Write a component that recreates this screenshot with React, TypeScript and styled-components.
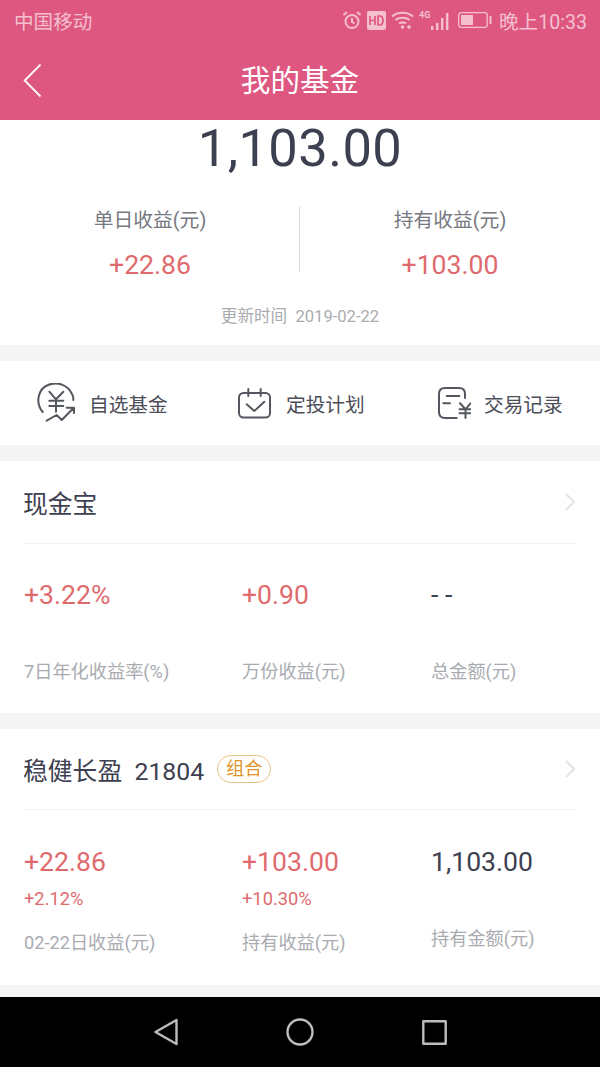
import React from "react";
import styled, { createGlobalStyle } from "styled-components";

const Global = createGlobalStyle`
  html, body { margin: 0; padding: 0; background: #f5f5f5; }
  body { font-family: Roboto, "Noto Sans CJK SC", sans-serif; }
  * { box-sizing: border-box; }
`;
const Page = styled.div`
  width: 600px; height: 1067px; display: flex; flex-direction: column; overflow: hidden; background: #f5f5f5;
`;
const Top = styled.div`
  background: #de5780; height: 120px; flex: none; display: flex; flex-direction: column;
`;
const Status = styled.div`
  height: 40px; padding: 0 13px 0 14px; display: flex; align-items: center; justify-content: space-between;
  color: #f4c0d0; font-size: 19.6px;
`;
const StatusRight = styled.div`
  display: flex; align-items: center; gap: 5px;
`;
const SignalIcon = styled.svg`
  margin-right: 4px;
`;
const BatteryIcon = styled.svg`
  margin-right: 2px;
`;
const Header = styled.div`
  height: 80px; display: flex; align-items: center; justify-content: center; position: relative;
  color: #fff; font-size: 29.6px; padding-bottom: 3px;
`;
const Back = styled.svg`
  position: absolute; left: 23px; top: 24px;
`;
const Hero = styled.div`
  background: #fff; height: 225px; flex: none; display: flex; flex-direction: column; align-items: center;
`;
const Total = styled.div`
  font-size: 52.5px; line-height: 56px; color: #3d4050; height: 56px; letter-spacing: 0.4px;
`;
const Split = styled.div`
  width: 100%; display: flex; margin-top: 30px; position: relative;
  &::before {
    content: ""; position: absolute; left: 299px; top: 0; width: 1px; height: 66px; background: #dcdcdc;
  }
`;
const SplitCol = styled.div`
  flex: 1; display: flex; flex-direction: column; align-items: center;
`;
const SplitLabel = styled.div`
  font-size: 19.8px; line-height: 30px; color: #76787f;
`;
const SplitValue = styled.div`
  font-size: 26.6px; line-height: 30px; color: #df6a6e; margin-top: 14px;
`;
const Updated = styled.div`
  font-size: 16.6px; line-height: 22px; color: #a9abb0; margin-top: 26px; white-space: pre;
`;
const Gap = styled.div<{ $h: number }>`
  height: ${(p) => p.$h}px; flex: none; background: #f5f5f5;
`;
const Shortcuts = styled.div`
  background: #fff; height: 84px; flex: none; display: grid; grid-template-columns: 201px 200px 1fr; padding-left: 37px; align-items: center;
`;
const Shortcut = styled.div`
  display: flex; align-items: center; gap: 13px; color: #4c4e58; font-size: 19.7px;
`;
const Card = styled.div<{ $h: number }>`
  background: #fff; height: ${(p) => p.$h}px; flex: none; padding: 0 24px; display: flex; flex-direction: column;
`;
const CardHead = styled.div<{ $h: number }>`
  height: ${(p) => p.$h}px; flex: none; border-bottom: 1px solid #f2f2f2; display: flex; align-items: center; position: relative;
  font-size: 24.8px; color: #3d4050; padding-bottom: 1px;
`;
const CardTitle = styled.span`
  white-space: pre; margin-left: -1px;
`;
const Tag = styled.span`
  margin-left: 13px; width: 54px; height: 28px; border: 1px solid #e8c283; border-radius: 14px;
  font-size: 18px; line-height: 25px; color: #e0952a; text-align: center;
`;
const Chevron = styled.svg`
  position: absolute; right: 0; top: 50%; transform: translateY(-50%);
`;
const Cols = styled.div`
  display: grid; grid-template-columns: 218px 189px 1fr; flex: 1;
`;
const Col = styled.div<{ $pt: number }>`
  display: flex; flex-direction: column; padding-top: ${(p) => p.$pt}px;
`;
const Value = styled.div<{ $dark?: boolean }>`
  font-size: 26.6px; line-height: 30px; color: ${(p) => (p.$dark ? "#3d4050" : "#df6a6e")};
`;
const Sub = styled.div`
  font-size: 18.3px; line-height: 20px; color: #df6a6e; margin-top: 12px;
`;
const Label = styled.div<{ $mt: number }>`
  font-size: 18.2px; line-height: 24px; color: #a9abb0; margin-top: ${(p) => p.$mt}px;
`;
const Nav = styled.div`
  margin-top: auto; height: 70px; flex: none; background: #000; display: flex; align-items: center; justify-content: center; gap: 108px;
`;

const Chev = () => (
  <Chevron width="12" height="18" viewBox="0 0 12 18" fill="none">
    <path d="M2 1l8 8-8 8" stroke="#e6e6e6" strokeWidth="2.4" />
  </Chevron>
);

const ico = { fill: "none", stroke: "#55575f", strokeWidth: 2, strokeLinecap: "round" as const, strokeLinejoin: "round" as const };
const statusColor = "#f4c0d0";

export default function App() {
  return (
    <Page>
      <Global />
      <Top>
        <Status>
          <span>中国移动</span>
          <StatusRight>
            <svg width="20" height="20" viewBox="0 0 20 20" fill="none" stroke={statusColor} strokeWidth="2">
              <circle cx="10" cy="11.5" r="6.5" />
              <path d="M10 8v4l2.5 1.5M1.5 5L5 2M18.5 5L15 2" />
            </svg>
            <svg width="19" height="19" viewBox="0 0 19 19">
              <rect width="19" height="19" rx="2" fill={statusColor} />
              <path d="M3 5v9M8 5v9M3 9.5h5M11 5v9h1.500c2.500 0 3.500-2 3.500-4.500S15 5 12.500 5z" stroke="#de5780" strokeWidth="1.7" fill="none" />
            </svg>
            <svg width="23" height="20" viewBox="0 0 23 20" fill="none" stroke={statusColor} strokeWidth="2">
              <path d="M1 6.500c5.500-5 15.500-5 21 0M4.500 10c3.500-3 10.500-3 14 0M8 13.500c1.500-1.200 5.500-1.200 7 0" />
              <circle cx="11.5" cy="17" r="1.7" fill={statusColor} stroke="none" />
              <path d="M18 15v4M16 17h4" strokeWidth="1.5" />
            </svg>
            <SignalIcon width="30" height="21" viewBox="0 0 30 21" fill={statusColor}>
              <text x="0" y="8" fontSize="9" fontWeight="700" fontFamily="Roboto, sans-serif">4G</text>
              <rect x="12" y="16" width="2.4" height="4" />
              <rect x="17" y="13" width="2.4" height="7" />
              <rect x="22" y="8" width="2.4" height="12" />
              <rect x="27" y="3" width="2.4" height="17" />
            </SignalIcon>
            <BatteryIcon width="34" height="16" viewBox="0 0 34 16">
              <rect x="0.7" y="0.7" width="28.5" height="14.6" rx="2.5" fill="none" stroke={statusColor} strokeWidth="1.3" />
              <rect x="3" y="3" width="12" height="10" fill={statusColor} />
              <rect x="31.5" y="4" width="2" height="8" fill={statusColor} />
            </BatteryIcon>
            <span>晚上10:33</span>
          </StatusRight>
        </Status>
        <Header>
          <Back width="19" height="33" viewBox="0 0 19 33" fill="none">
            <path d="M17.500 0.500L1.700 16.500 17.500 32.500" stroke="#fff" strokeWidth="1.8" />
          </Back>
          我的基金
        </Header>
      </Top>
      <Hero>
        <Total>1,103.00</Total>
        <Split>
          <SplitCol>
            <SplitLabel>单日收益(元)</SplitLabel>
            <SplitValue>+22.86</SplitValue>
          </SplitCol>
          <SplitCol>
            <SplitLabel>持有收益(元)</SplitLabel>
            <SplitValue>+103.00</SplitValue>
          </SplitCol>
        </Split>
        <Updated>更新时间  2019-02-22</Updated>
      </Hero>
      <Gap $h={16} />
      <Shortcuts>
        <Shortcut>
          <svg width="39" height="40" viewBox="0 0 39 40" {...ico}>
            <path d="M5.700 29C-2 20 1 6 11 2c9-4 20 0 24 9 1.500 2.500 1.500 4 1.300 6" />
            <path d="M12.300 8.700L19 16.300l7.300-7.600M12.300 17.700h14M12.300 23h14M19 17v11.700" />
            <path d="M9.700 37.700L19.700 32l5 5 11.600-11.700M29.700 24.700H37V30" />
          </svg>
          自选基金
        </Shortcut>
        <Shortcut>
          <svg width="35" height="31" viewBox="0 0 35 31" {...ico}>
            <rect x="1" y="5" width="31" height="24.5" rx="4.5" />
            <path d="M10.300 1v7M22.700 1v7M8.700 16.300l7.600 6.700 10-9.300" />
          </svg>
          定投计划
        </Shortcut>
        <Shortcut>
          <svg width="33" height="32" viewBox="0 0 33 32" {...ico}>
            <path d="M27 11V7c0-4-2-6-6-6H7C3 1 1 3 1 7v18c0 4 2 6 6 6h11.700" />
            <path d="M8.700 9h12.600M5.300 16.300H12M22 16.300l5.500 6 5-6M21.500 22.300h11M21.500 26.300h11M27.500 22.300V31" />
          </svg>
          交易记录
        </Shortcut>
      </Shortcuts>
      <Gap $h={16} />
      <Card $h={252}>
        <CardHead $h={83}>
          <CardTitle>现金宝</CardTitle>
          <Chev />
        </CardHead>
        <Cols>
          <Col $pt={36}>
            <Value>+3.22%</Value>
            <Label $mt={50}>7日年化收益率(%)</Label>
          </Col>
          <Col $pt={36}>
            <Value>+0.90</Value>
            <Label $mt={50}>万份收益(元)</Label>
          </Col>
          <Col $pt={36}>
            <Value $dark>- -</Value>
            <Label $mt={50}>总金额(元)</Label>
          </Col>
        </Cols>
      </Card>
      <Gap $h={16} />
      <Card $h={256}>
        <CardHead $h={81}>
          <CardTitle>稳健长盈  21804</CardTitle>
          <Tag>组合</Tag>
          <Chev />
        </CardHead>
        <Cols>
          <Col $pt={37}>
            <Value>+22.86</Value>
            <Sub>+2.12%</Sub>
            <Label $mt={22}>02-22日收益(元)</Label>
          </Col>
          <Col $pt={37}>
            <Value>+103.00</Value>
            <Sub>+10.30%</Sub>
            <Label $mt={22}>持有收益(元)</Label>
          </Col>
          <Col $pt={37}>
            <Value $dark>1,103.00</Value>
            <Label $mt={50}>持有金额(元)</Label>
          </Col>
        </Cols>
      </Card>
      <Nav>
        <svg width="24" height="28" viewBox="0 0 24 28" fill="none" stroke="#bdbdbd" strokeWidth="2.4" strokeLinejoin="round">
          <path d="M22.500 2v24L1.500 14z" />
        </svg>
        <svg width="28" height="28" viewBox="0 0 28 28" fill="none" stroke="#bdbdbd" strokeWidth="2.4">
          <circle cx="14" cy="14" r="12.5" />
        </svg>
        <svg width="25" height="25" viewBox="0 0 25 25" fill="none" stroke="#bdbdbd" strokeWidth="2.4" strokeLinejoin="round">
          <rect x="1.3" y="1.3" width="22.4" height="22.4" />
        </svg>
      </Nav>
    </Page>
  );
}
